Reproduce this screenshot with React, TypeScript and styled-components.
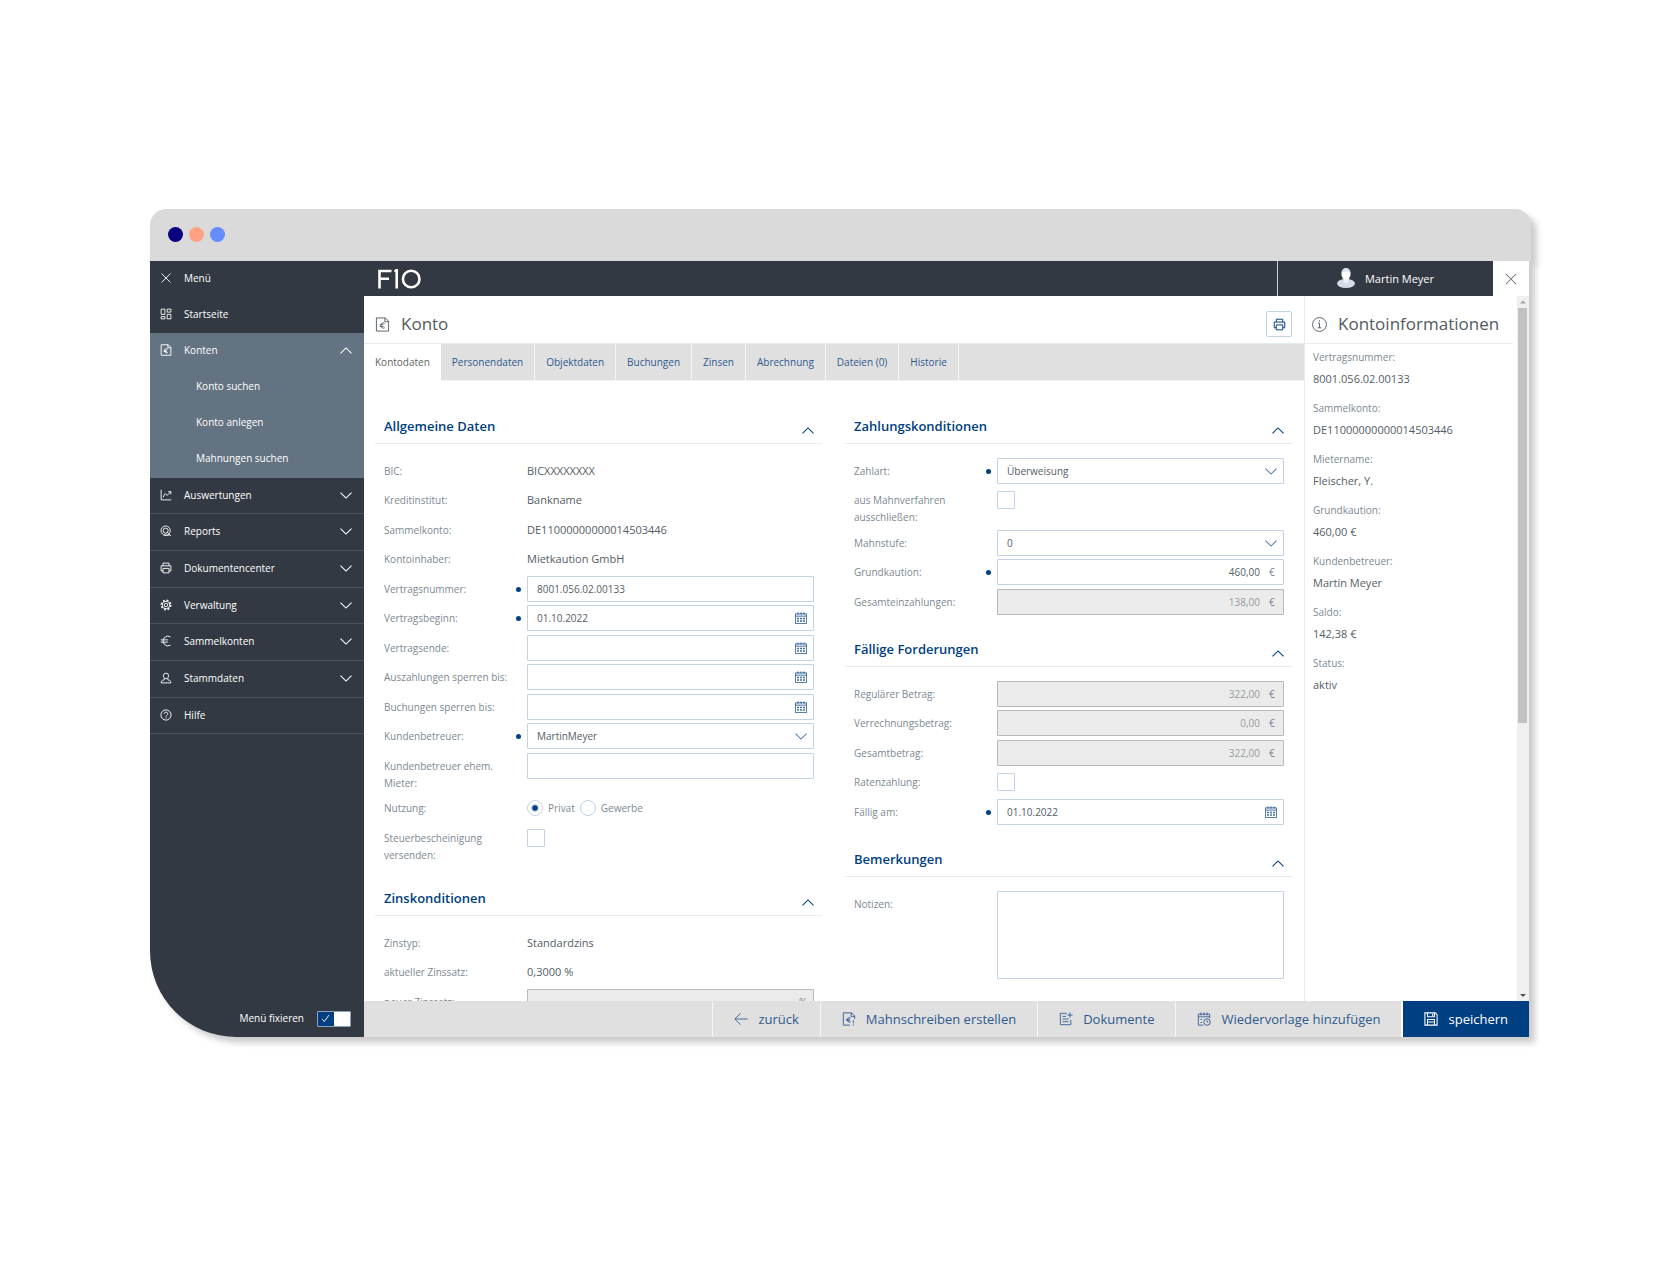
import React, { useId } from "react";
import styled, { createGlobalStyle, css } from "styled-components";

const color = {
  navy: "#003f82",
  ink: "#555e66",
  label: "#7c8993",
  dark: "#323942",
  slate: "#637382",
  grey: "#e0e0e0",
  line: "#e6ebf0",
  field: "#c3d2e4",
  link: "#2f5a8f",
};

const GlobalStyle = createGlobalStyle`
  *, *::before, *::after { box-sizing: border-box; }
  body {
    margin: 0;
    background: #fff;
    color: ${color.ink};
    font: 400 10px/17px "Open Sans", "Noto Sans", sans-serif;
  }
  button, input, select, textarea { font: inherit; color: inherit; margin: 0; }
  button { border: 0; background: none; padding: 0; cursor: pointer; }
  h1, h2, p, ul, dl, dd { margin: 0; padding: 0; font-weight: 400; }
  ul { list-style: none; }
  svg { display: block; flex: none; }
`;

/* ---------- icons ---------- */

const shapes = {
  close: <path d="M2 2l12 12M14 2L2 14" />,
  grid: (
    <path d="M1.5 1.5h5v7h-5zM9.500 1.500h5v4h-5zM1.500 11.500h5v3h-5zM9.500 8.500h5v6h-5z" />
  ),
  euroDoc: (
    <>
      <path d="M1.500 1h9.500l3.500 3.500V15h-13zM10.500 1v4h4" />
      <path d="M10.500 6.800a2.800 2.800 0 1 0 0 4.600M5 8.300h4M5 10h4" />
    </>
  ),
  dunning: (
    <>
      <path d="M9 15H1.500V1h9.500l3.500 3.500V8M10.500 1v4h4" />
      <path d="M10 6.800a2.600 2.600 0 1 0 0 4.400M5 8.300h4M5 9.800h4M13 9.500v3.500M13 14.200v1.300" />
    </>
  ),
  chart: <path d="M1.500 1v13.500H15M4 11l3-5 2.500 2.500L14 4M11 3.500h3.500V7" />,
  report: (
    <>
      <circle cx="7.500" cy="7.500" r="6.200" />
      <circle cx="7.500" cy="7.500" r="3.400" />
      <path d="M9.500 9.500l5 5M5 13.500h8" />
    </>
  ),
  printer: (
    <>
      <path d="M4 5V1.500h8V5M4 12H1.500V5h13v7H12" />
      <path d="M4 8.500h8v6H4z" />
    </>
  ),
  gear: (
    <>
      <circle cx="8" cy="8" r="2.300" />
      <circle cx="8" cy="8" r="5" />
      <circle cx="8" cy="8" r="6.300" strokeWidth="2" strokeDasharray="2.500 2.450" />
    </>
  ),
  euro: <path d="M14 2.500a6.500 6.500 0 1 0 0 11M1 6.500h9.500M1 9.500h9.500" />,
  person: (
    <path d="M8 1.500a3.500 3.500 0 0 1 3.500 3.500c0 2-1.500 4-3.500 4S4.500 7 4.500 5A3.500 3.500 0 0 1 8 1.500zM5.500 8.500v2c-3 .5-4 1.500-4 4h13c0-2.500-1-3.500-4-4v-2" />
  ),
  help: (
    <>
      <circle cx="8" cy="8" r="6.800" />
      <path d="M5.700 6.500a2.300 2.300 0 1 1 3.400 2c-.8.4-1.100.8-1.100 1.700M8 11.200v1.300" />
    </>
  ),
  info: (
    <>
      <circle cx="8" cy="8" r="7.400" />
      <path d="M6.500 6.500H8v5M6 11.500h4M8 3.600v1.400" />
    </>
  ),
  calendar: (
    <>
      <path d="M.5 2.500h15v13H.5zM.5 5.500h15M4 .5v3M8 .5v3M12 .5v3" />
      <path d="M3 8.500h2M7 8.500h2M11 8.500h2M3 12h2M7 12h2M11 12h2" strokeWidth="2" />
    </>
  ),
  reminder: (
    <>
      <path d="M7 15H1.500V2.500h13V7M1.500 5.500h13M4.500.5v3.500M8 .5v3.500M11.500.5v3.500M4 8.500h2M4 12h2" />
      <circle cx="11.500" cy="11.500" r="3.700" />
      <path d="M11.500 9.500v2H13" />
    </>
  ),
  docAdd: (
    <path d="M9 1.500H1.500v13h12V9M4 5h4M4 8h7M4 11h7M12.500.5v6M9.500 3.500h6" />
  ),
  back: <path d="M15.500 8H1M7.500 1.500L1 8l6.500 6.500" />,
  save: (
    <path d="M1 1h12l2 2v12H1zM4 1v4.500h8V1M10 2v2.500M4 15V8.500h8V15M4 11.500h8" />
  ),
  check: <path d="M2 9l4 4.500L14 2" />,
};

type IconName = keyof typeof shapes;

function Icon({ name, size = 12, weight = 1.2 }: { name: IconName; size?: number; weight?: number }) {
  return (
    <svg width={size} height={size} viewBox="0 0 16 16" fill="none" stroke="currentColor" strokeWidth={weight} aria-hidden="true">
      {shapes[name]}
    </svg>
  );
}

function Chevron({ up }: { up?: boolean }) {
  return (
    <svg width="12" height="7" viewBox="0 0 12 7" fill="none" stroke="currentColor" strokeWidth="1.100" aria-hidden="true">
      <path d={up ? "M.5 6.300L6 .9l5.500 5.400" : "M.5 .7L6 6.100 11.500.7"} />
    </svg>
  );
}

/* ---------- window ---------- */

const shadow = "6px 6px 6px rgba(0, 0, 0, 0.2)";

const Page = styled.div`
  display: flex;
  flex-direction: column;
  height: 100vh;
  min-height: 700px;
  min-width: 1200px;
  padding: 209px 149px 243px 150px;
`;

const TitleBar = styled.div`
  display: flex;
  flex: none;
  align-items: center;
  gap: 6px;
  height: 52px;
  padding: 0 18px 2px;
  border-radius: 16px 16px 0 0;
  background: #dadada;
  box-shadow: ${shadow};
`;

const Dot = styled.span<{ $fill: string }>`
  width: 15px;
  height: 15px;
  border-radius: 50%;
  background: ${(p) => p.$fill};
`;

const Body = styled.div`
  display: grid;
  grid-template-columns: 214px minmax(0, 1fr);
  flex: 1;
  min-height: 0;
  margin-right: 2px;
  overflow: hidden;
  border-bottom-left-radius: 86px;
  background: #fff;
  box-shadow: ${shadow};
`;

/* ---------- sidebar ---------- */

const Sidebar = styled.nav`
  display: flex;
  flex-direction: column;
  min-height: 0;
  background: ${color.dark};
  color: #fff;
`;

const MenuButton = styled.button`
  display: flex;
  align-items: center;
  gap: 12px;
  width: 100%;
  height: 36px;
  padding: 0 12px 2px 10px;
  text-align: left;
`;

const MenuText = styled.span`
  flex: 1;
`;

const OpenGroup = styled.div`
  height: 145px;
  background: ${color.slate};
`;

const SubLink = styled.a`
  display: flex;
  align-items: center;
  height: 36px;
  padding: 0 0 2px 46px;
  color: inherit;
  text-decoration: none;
`;

const MenuList = styled.ul`
  flex: 1;
`;

const MenuEntry = styled.li`
  height: 37px;
  border-bottom: 1px solid #4b535d;

  &:nth-child(3n + 1) {
    height: 36px;
  }
`;

const PinRow = styled.label`
  display: flex;
  align-items: center;
  justify-content: flex-end;
  gap: 13px;
  height: 37px;
  padding-right: 13px;
`;

const Stack = styled.span`
  display: grid;
  align-items: center;

  > * {
    grid-area: 1 / 1;
  }
`;

const Toggle = styled.input`
  appearance: none;
  width: 34px;
  height: 16px;
  border: 1px solid #8ba3c0;
  border-radius: 1px;
  background: linear-gradient(90deg, ${color.navy} 50%, #fff 50%);
`;

const ToggleMark = styled.span`
  padding-left: 4px;
  pointer-events: none;
`;

/* ---------- top bar ---------- */

const Main = styled.div`
  display: flex;
  flex-direction: column;
  min-width: 0;
  min-height: 0;
`;

const TopBar = styled.header`
  display: flex;
  flex: none;
  height: 35px;
  background: ${color.dark};
  color: #fff;
`;

const LogoArea = styled.div`
  display: flex;
  flex: 1;
  align-items: center;
  padding-left: 14px;
`;

const User = styled.button`
  display: flex;
  align-items: center;
  justify-content: center;
  gap: 10px;
  width: 216px;
  padding-bottom: 1px;
  border-left: 1px solid #cfd3d7;
  font-size: 11px;
`;

const CloseButton = styled.button`
  display: grid;
  place-items: center;
  width: 36px;
  background: #fff;
  color: #6c7470;
`;

/* ---------- workspace ---------- */

const Workspace = styled.div`
  display: grid;
  grid-template-columns: minmax(0, 1fr) 213px 12px;
  flex: 1;
  min-height: 0;
  overflow: hidden;
`;

const Account = styled.main`
  min-width: 0;
  min-height: 0;
  overflow: hidden;
`;

const Heading = styled.div<{ $inset: string }>`
  display: flex;
  align-items: center;
  gap: 11px;
  height: 48px;
  padding: ${(p) => p.$inset};
  border-bottom: 1px solid ${color.line};
`;

const Title = styled.h1`
  flex: 1;
  color: #525a5e;
  font-size: 17px;
  line-height: 24px;
`;

const PrintButton = styled.button`
  display: grid;
  place-items: center;
  width: 26px;
  height: 26px;
  border: 1px solid ${color.field};
  border-radius: 2px;
  color: ${color.navy};
`;

const Tabs = styled.div`
  display: flex;
  height: 37px;
  border-bottom: 1px solid #eef2f6;
  background: ${color.grey};
`;

const Tab = styled.button<{ $active: boolean }>`
  padding: 0 11px;
  color: ${color.link};
  border-right: 1px solid #f4f6f8;
  ${(p) =>
    p.$active &&
    css`
      margin-bottom: -1px;
      padding-bottom: 1px;
      border: 0;
      background: #fff;
      color: #5f665f;
    `}
`;

const Columns = styled.div`
  display: grid;
  grid-template-columns: minmax(0, 1fr) minmax(0, 1fr);
  gap: 23px;
  padding: 30px 12px 0 11px;
`;

const Column = styled.div`
  display: flex;
  flex-direction: column;
  gap: 19px;
`;

const SectionHead = styled.div`
  display: flex;
  align-items: center;
  justify-content: space-between;
  height: 33px;
  padding: 0 8px 2px 9px;
  border-bottom: 1px solid ${color.line};
  color: ${color.navy};
`;

const SectionTitle = styled.h2`
  font-size: 13px;
  font-weight: 600;
`;

const Collapse = styled.button`
  padding-top: 9px;
`;

const Rows = styled.div`
  padding: 14px 8px 0 9px;
`;

const Row = styled.div`
  display: grid;
  grid-template-columns: 143px minmax(0, 1fr);
  min-height: 26px;
  margin-bottom: 3px;

  &:nth-child(even) {
    margin-bottom: 4px;
  }

  &:last-child {
    margin-bottom: 0;
  }
`;

const LabelCell = styled.div`
  display: flex;
  justify-content: space-between;
  padding: 5px 6px 0 0;
  color: ${color.label};
`;

const LabelText = styled.label`
  max-width: 126px;
`;

const Required = styled.span`
  width: 5px;
  height: 5px;
  margin-top: 6px;
  border-radius: 50%;
  background: ${color.navy};
`;

const Value = styled.output`
  padding-top: 4px;
  font-size: 11px;
`;

const FieldBox = styled.span<{ $locked?: boolean }>`
  display: flex;
  align-items: center;
  height: 26px;
  padding-right: 6px;
  border: 1px solid ${(p) => (p.$locked ? "#b9b9b9" : color.field)};
  border-radius: 1px;
  background: ${(p) => (p.$locked ? "#ebebeb" : "#fff")};
  color: ${(p) => (p.$locked ? "#979b9e" : color.ink)};
`;

const TextInput = styled.input<{ $right?: boolean }>`
  flex: 1;
  min-width: 0;
  height: 24px;
  padding: 0 9px;
  border: 0;
  outline: 0;
  background: transparent;
  text-align: ${(p) => (p.$right ? "right" : "left")};
`;

const Unit = styled.span`
  width: 8px;
  color: #74818c;
`;

const IconButton = styled.button`
  color: ${color.navy};
`;

const Select = styled.select`
  appearance: none;
  width: 100%;
  height: 26px;
  padding: 0 24px 0 9px;
  border: 1px solid ${color.field};
  border-radius: 1px;
  background: #fff;
`;

const SelectArrow = styled.span`
  justify-self: end;
  padding-right: 7px;
  color: #5680b0;
  pointer-events: none;
`;

const CheckBox = styled.input`
  appearance: none;
  width: 18px;
  height: 18px;
  margin-top: 4px;
  border: 1px solid ${color.field};
  border-radius: 1px;
  background: #fff;
`;

const RadioGroup = styled.div`
  display: flex;
  align-items: center;
  gap: 5px;
  color: ${color.label};
`;

const RadioLabel = styled.label`
  display: flex;
  align-items: center;
  gap: 5px;
`;

const Radio = styled.input`
  appearance: none;
  width: 16px;
  height: 16px;
  border: 1px solid ${color.field};
  border-radius: 50%;

  &:checked {
    background: radial-gradient(circle, ${color.navy} 2px, #fff 4px);
  }
`;

const Notes = styled.textarea`
  display: block;
  width: 100%;
  height: 88px;
  padding: 8px;
  border: 1px solid ${color.field};
  border-radius: 1px;
  resize: none;
`;

/* ---------- info panel ---------- */

const InfoPanel = styled.aside`
  padding-right: 4px;
  border-left: 1px solid ${color.line};
`;

const InfoList = styled.dl`
  padding: 5px 8px;
`;

const InfoItem = styled.div`
  height: 51px;
`;

const InfoTerm = styled.dt`
  color: ${color.label};
`;

const InfoValue = styled.dd`
  padding-top: 4px;
  font-size: 11px;
`;

const ScrollBar = styled.div`
  display: flex;
  flex-direction: column;
  background: #f0f0f0;
`;

const ScrollTrack = styled.div`
  flex: 1;
  padding: 0 2px 0 1px;
`;

const ScrollThumb = styled.div`
  height: 61%;
  background: #c1c1c1;
`;

/* ---------- footer ---------- */

const Footer = styled.footer`
  display: flex;
  flex: none;
  justify-content: flex-end;
  height: 36px;
  background: ${color.grey};
`;

const Action = styled.button<{ $primary?: boolean }>`
  display: flex;
  align-items: center;
  gap: 10px;
  padding: 0 21px;
  border-left: 1px solid #f6f6f6;
  color: ${color.link};
  font-size: 13px;
  ${(p) =>
    p.$primary &&
    css`
      border-left: 2px solid #fff;
      background: ${color.navy};
      color: #fff;
    `}
`;

/* ---------- pieces ---------- */

function Section({ title, children }: { title: string; children: React.ReactNode }) {
  return (
    <section>
      <SectionHead>
        <SectionTitle>{title}</SectionTitle>
        <Collapse type="button" aria-label={`${title} einklappen`}>
          <Chevron up />
        </Collapse>
      </SectionHead>
      <Rows>{children}</Rows>
    </section>
  );
}

type Kind = "value" | "text" | "date" | "select" | "amount" | "check" | "notes";

interface FieldProps {
  label: string;
  kind: Kind;
  value?: string;
  unit?: string;
  required?: boolean;
  locked?: boolean;
}

function Field({ label, kind, value = "", unit = "€", required, locked }: FieldProps) {
  const id = useId();
  return (
    <Row>
      <LabelCell>
        <LabelText htmlFor={id}>{label}</LabelText>
        {required && <Required />}
      </LabelCell>
      {kind === "value" && <Value id={id}>{value}</Value>}
      {kind === "text" && (
        <FieldBox>
          <TextInput id={id} defaultValue={value} />
        </FieldBox>
      )}
      {kind === "date" && (
        <FieldBox>
          <TextInput id={id} defaultValue={value} />
          <IconButton type="button" aria-label="Kalender">
            <Icon name="calendar" weight={1} />
          </IconButton>
        </FieldBox>
      )}
      {kind === "amount" && (
        <FieldBox $locked={locked}>
          <TextInput id={id} defaultValue={value} disabled={locked} $right />
          <Unit>{unit}</Unit>
        </FieldBox>
      )}
      {kind === "select" && (
        <Stack>
          <Select id={id} defaultValue={value}>
            <option>{value}</option>
          </Select>
          <SelectArrow>
            <Chevron />
          </SelectArrow>
        </Stack>
      )}
      {kind === "check" && <CheckBox id={id} type="checkbox" />}
      {kind === "notes" && <Notes id={id} />}
    </Row>
  );
}

const menu: [IconName, string, boolean][] = [
  ["chart", "Auswertungen", true],
  ["report", "Reports", true],
  ["printer", "Dokumentencenter", true],
  ["gear", "Verwaltung", true],
  ["euro", "Sammelkonten", true],
  ["person", "Stammdaten", true],
  ["help", "Hilfe", false],
];

const tabs = ["Kontodaten", "Personendaten", "Objektdaten", "Buchungen", "Zinsen", "Abrechnung", "Dateien (0)", "Historie"];

const info = [
  ["Vertragsnummer:", "8001.056.02.00133"],
  ["Sammelkonto:", "DE11000000000014503446"],
  ["Mietername:", "Fleischer, Y."],
  ["Grundkaution:", "460,00 €"],
  ["Kundenbetreuer:", "Martin Meyer"],
  ["Saldo:", "142,38 €"],
  ["Status:", "aktiv"],
];

const actions: [IconName, string][] = [
  ["back", "zurück"],
  ["dunning", "Mahnschreiben erstellen"],
  ["docAdd", "Dokumente"],
  ["reminder", "Wiedervorlage hinzufügen"],
];

function SideMenu() {
  return (
    <Sidebar>
      <MenuButton type="button">
        <Icon name="close" />
        <MenuText>Menü</MenuText>
      </MenuButton>
      <MenuButton type="button">
        <Icon name="grid" />
        <MenuText>Startseite</MenuText>
      </MenuButton>
      <OpenGroup>
        <MenuButton type="button">
          <Icon name="euroDoc" />
          <MenuText>Konten</MenuText>
          <Chevron up />
        </MenuButton>
        <SubLink href="#suchen">Konto suchen</SubLink>
        <SubLink href="#anlegen">Konto anlegen</SubLink>
        <SubLink href="#mahnungen">Mahnungen suchen</SubLink>
      </OpenGroup>
      <MenuList>
        {menu.map(([icon, text, opens]) => (
          <MenuEntry key={text}>
            <MenuButton type="button">
              <Icon name={icon} />
              <MenuText>{text}</MenuText>
              {opens && <Chevron />}
            </MenuButton>
          </MenuEntry>
        ))}
      </MenuList>
      <PinRow>
        Menü fixieren
        <Stack>
          <Toggle type="checkbox" defaultChecked />
          <ToggleMark>
            <Icon name="check" size={9} weight={1.6} />
          </ToggleMark>
        </Stack>
      </PinRow>
    </Sidebar>
  );
}

function Logo() {
  return (
    <svg width="44" height="20" viewBox="0 0 44 20" fill="none" stroke="#fff" strokeWidth="2.600" role="img" aria-label="FIO">
      <path d="M1.500 19.500V2H13.500M1.500 9.800H11" />
      <path d="M18.700 19.500V.8l-2 2" />
      <circle cx="33.200" cy="10" r="8.300" />
    </svg>
  );
}

function Avatar() {
  return (
    <svg width="18" height="20" viewBox="0 0 18 20" aria-hidden="true">
      <ellipse cx="9" cy="15.500" rx="9" ry="4.500" fill="#d3dde8" />
      <path d="M6.500 10h5v4L9 15.500 6.500 14z" fill="#eef2f6" />
      <ellipse cx="9" cy="6" rx="4.600" ry="6" fill="#fff" />
      <path d="M4.500 5c0-3 2-5 4.500-5s4.500 2 4.500 5c-1.500-2-7-2-9 0z" fill="#d9dee3" />
    </svg>
  );
}

function ScrollArrow({ down }: { down?: boolean }) {
  return (
    <svg width="12" height="12" viewBox="0 0 12 12" aria-hidden="true">
      {down ? <path d="M3 5h6L6 8z" fill="#505050" /> : <path d="M3 7.500h6L6 4.500z" fill="#a3a3a3" />}
    </svg>
  );
}

export default function App() {
  return (
    <Page>
      <GlobalStyle />
      <TitleBar>
        <Dot $fill="#0b0080" />
        <Dot $fill="#ffa283" />
        <Dot $fill="#668cff" />
      </TitleBar>
      <Body>
        <SideMenu />
        <Main>
          <TopBar>
            <LogoArea>
              <Logo />
            </LogoArea>
            <User type="button">
              <Avatar />
              Martin Meyer
            </User>
            <CloseButton type="button" aria-label="Schließen">
              <Icon name="close" size={14} />
            </CloseButton>
          </TopBar>
          <Workspace>
            <Account>
              <Heading $inset="9px 12px 0 11px">
                <Icon name="euroDoc" size={15} weight={1} />
                <Title>Konto</Title>
                <PrintButton type="button" aria-label="Drucken">
                  <Icon name="printer" size={13} />
                </PrintButton>
              </Heading>
              <Tabs role="tablist">
                {tabs.map((tab, i) => (
                  <Tab key={tab} type="button" role="tab" aria-selected={i === 0} $active={i === 0}>
                    {tab}
                  </Tab>
                ))}
              </Tabs>
              <Columns>
                <Column>
                  <Section title="Allgemeine Daten">
                    <Field label="BIC:" kind="value" value="BICXXXXXXXX" />
                    <Field label="Kreditinstitut:" kind="value" value="Bankname" />
                    <Field label="Sammelkonto:" kind="value" value="DE11000000000014503446" />
                    <Field label="Kontoinhaber:" kind="value" value="Mietkaution GmbH" />
                    <Field label="Vertragsnummer:" kind="text" value="8001.056.02.00133" required />
                    <Field label="Vertragsbeginn:" kind="date" value="01.10.2022" required />
                    <Field label="Vertragsende:" kind="date" />
                    <Field label="Auszahlungen sperren bis:" kind="date" />
                    <Field label="Buchungen sperren bis:" kind="date" />
                    <Field label="Kundenbetreuer:" kind="select" value="MartinMeyer" required />
                    <Field label="Kundenbetreuer ehem. Mieter:" kind="text" />
                    <Row role="radiogroup" aria-labelledby="usage">
                      <LabelCell id="usage">Nutzung:</LabelCell>
                      <RadioGroup>
                        <RadioLabel>
                          <Radio type="radio" name="usage" defaultChecked />
                          Privat
                        </RadioLabel>
                        <RadioLabel>
                          <Radio type="radio" name="usage" />
                          Gewerbe
                        </RadioLabel>
                      </RadioGroup>
                    </Row>
                    <Field label="Steuerbescheinigung versenden:" kind="check" />
                  </Section>
                  <Section title="Zinskonditionen">
                    <Field label="Zinstyp:" kind="value" value="Standardzins" />
                    <Field label="aktueller Zinssatz:" kind="value" value="0,3000 %" />
                    <Field label="neuer Zinssatz:" kind="amount" unit="%" locked />
                  </Section>
                </Column>
                <Column>
                  <Section title="Zahlungskonditionen">
                    <Field label="Zahlart:" kind="select" value="Überweisung" required />
                    <Field label="aus Mahnverfahren ausschließen:" kind="check" />
                    <Field label="Mahnstufe:" kind="select" value="0" />
                    <Field label="Grundkaution:" kind="amount" value="460,00" required />
                    <Field label="Gesamteinzahlungen:" kind="amount" value="138,00" locked />
                  </Section>
                  <Section title="Fällige Forderungen">
                    <Field label="Regulärer Betrag:" kind="amount" value="322,00" locked />
                    <Field label="Verrechnungsbetrag:" kind="amount" value="0,00" locked />
                    <Field label="Gesamtbetrag:" kind="amount" value="322,00" locked />
                    <Field label="Ratenzahlung:" kind="check" />
                    <Field label="Fällig am:" kind="date" value="01.10.2022" required />
                  </Section>
                  <Section title="Bemerkungen">
                    <Field label="Notizen:" kind="notes" />
                  </Section>
                </Column>
              </Columns>
            </Account>
            <InfoPanel>
              <Heading $inset="9px 0 0 7px">
                <Icon name="info" size={15} weight={1} />
                <Title as="h2">Kontoinformationen</Title>
              </Heading>
              <InfoList>
                {info.map(([term, value]) => (
                  <InfoItem key={term}>
                    <InfoTerm>{term}</InfoTerm>
                    <InfoValue>{value}</InfoValue>
                  </InfoItem>
                ))}
              </InfoList>
            </InfoPanel>
            <ScrollBar aria-hidden="true">
              <ScrollArrow />
              <ScrollTrack>
                <ScrollThumb />
              </ScrollTrack>
              <ScrollArrow down />
            </ScrollBar>
          </Workspace>
          <Footer>
            {actions.map(([icon, text]) => (
              <Action key={text} type="button">
                <Icon name={icon} size={14} weight={1} />
                {text}
              </Action>
            ))}
            <Action type="button" $primary>
              <Icon name="save" size={14} />
              speichern
            </Action>
          </Footer>
        </Main>
      </Body>
    </Page>
  );
}
